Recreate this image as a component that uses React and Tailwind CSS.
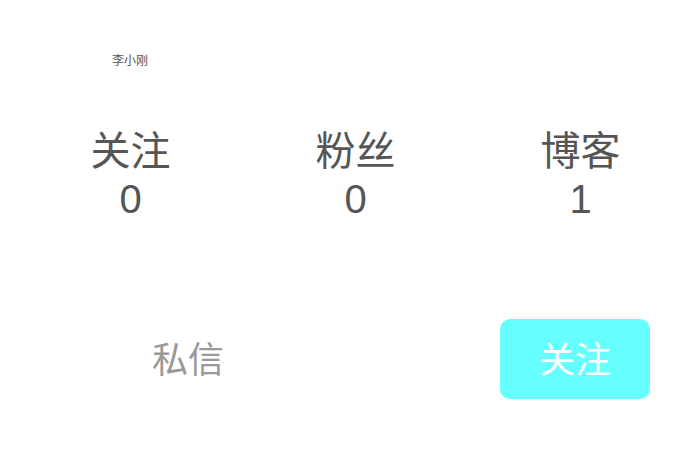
import React from "react";

const STATS = [
  { label: "关注", value: 0 },
  { label: "粉丝", value: 0 },
  { label: "博客", value: 1 },
];

export default function App() {
  return (
    <div className="w-[688px] h-[460px] bg-white text-[#555555] font-['Liberation_Sans','Noto_Sans_CJK_SC',sans-serif]">
      <div className="pt-[54px] pl-[112px] text-[12px] leading-[14px]">李小刚</div>

      <div className="mt-[59px] ml-[18px] w-[675px] grid grid-cols-3 text-center text-[40px] leading-[48px]">
        {STATS.map((s) => (
          <div key={s.label} className="flex flex-col items-center">
            <div>{s.label}</div>
            <div>{s.value}</div>
          </div>
        ))}
      </div>

      <div className="mt-[96px] pl-[113px] pr-[38px] flex items-center justify-between">
        <button className="w-[150px] pt-[4px] text-center text-[36px] leading-[40px] text-[#999999]">私信</button>
        <button className="w-[150px] h-[80px] pt-[4px] rounded-[10px] bg-[#66ffff] text-white text-[36px] leading-[40px]">关注</button>
      </div>
    </div>
  );
}
